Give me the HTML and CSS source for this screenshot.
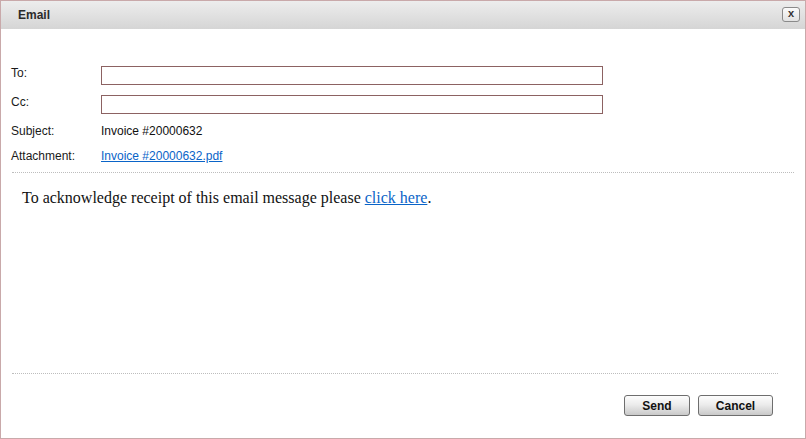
FILE: index.html
```html
<!DOCTYPE html>
<html>

<head>
    <title>Email</title>
    <link rel="stylesheet" href="styles.css">
</head>

<body>
    <div class="dialog">
        <div class="titlebar">
            <span class="title">Email</span>
            <button type="button" class="close">x</button>
        </div>

        <form class="fields">
            <div class="grid">
                <label for="to">To:</label>
                <input type="text" id="to" name="to">

                <label for="cc">Cc:</label>
                <input type="text" id="cc" name="cc">

                <span class="label">Subject:</span>
                <span class="value">Invoice #20000632</span>

                <span class="label">Attachment:</span>
                <span class="value"><a href="#">Invoice #20000632.pdf</a></span>
            </div>
        </form>

        <div class="message">
            To acknowledge receipt of this email message please <a href="#">click here</a>.
        </div>

        <div class="footer">
            <button type="button" class="btn send">Send</button>
            <button type="button" class="btn cancel">Cancel</button>
        </div>
    </div>
</body>

</html>
```

FILE: styles.css
```css
html,
body {
    margin: 0;
    padding: 0;
    background-color: #fff;
}

body {
    font-family: "Liberation Sans", Arial, sans-serif;
    font-size: 12px;
    color: #1a1a1a;
}

.dialog {
    box-sizing: border-box;
    width: 806px;
    height: 439px;
    border: 1px solid #c9a9aa;
    display: flex;
    flex-direction: column;
}

.titlebar {
    height: 28px;
    display: flex;
    align-items: center;
    justify-content: space-between;
    padding: 0 5px 0 17px;
    background: linear-gradient(#ededed, #d5d5d5);
}

.title {
    font-weight: bold;
    font-size: 12px;
    color: #2b2b2b;
    padding-bottom: 1px;
}

.close {
    box-sizing: border-box;
    width: 18px;
    height: 15px;
    margin-top: -1px;
    padding: 0 0 2px 0;
    border: 1px solid #8a8a8a;
    border-radius: 3px;
    background: linear-gradient(#fbfbfb, #e2e2e2);
    font-family: "Liberation Mono", monospace;
    font-size: 11px;
    font-weight: bold;
    line-height: 10px;
    color: #333;
}

.fields {
    margin: 0 11px;
    padding: 37px 0 8px 0;
    border-bottom: 1px dotted #bdbdbd;
}

.grid {
    display: grid;
    grid-template-columns: 90px 502px;
    grid-template-rows: 19px 19px 15px 15px;
    row-gap: 10px;
    align-items: start;
    margin-left: -1px;
}

.grid label,
.grid .label,
.grid .value {
    line-height: 14px;
}

.grid .label,
.grid label {
    color: #1a1a1a;
}

.grid input[type="text"] {
    box-sizing: border-box;
    width: 502px;
    height: 19px;
    margin: 0;
    padding: 0 3px;
    border: 1px solid #8c6262;
    font-family: "Liberation Sans", Arial, sans-serif;
    font-size: 12px;
}

.grid .value {
    color: #111;
}

a {
    color: #0a64c8;
}

.message {
    flex: 1;
    margin: 0 27px 0 11px;
    padding: 16px 10px 0 10px;
    font-family: "Liberation Serif", "Times New Roman", serif;
    font-size: 16px;
    line-height: 18px;
    color: #111;
    border-bottom: 1px dotted #bdbdbd;
}

.footer {
    display: flex;
    justify-content: flex-end;
    gap: 8px;
    padding: 21px 32px 22px 0;
}

.btn {
    box-sizing: border-box;
    height: 21px;
    padding: 0;
    border: 1px solid #6e6e6e;
    border-radius: 3px;
    background: linear-gradient(#fdfdfd 0%, #ececec 45%, #c9c9c9 100%);
    font-family: "Liberation Sans", Arial, sans-serif;
    font-size: 12px;
    font-weight: bold;
    color: #111;
    cursor: pointer;
}

.send {
    width: 66px;
}

.cancel {
    width: 75px;
}

.btn:hover {
    background: linear-gradient(#ffffff, #d8d8d8);
}
```
